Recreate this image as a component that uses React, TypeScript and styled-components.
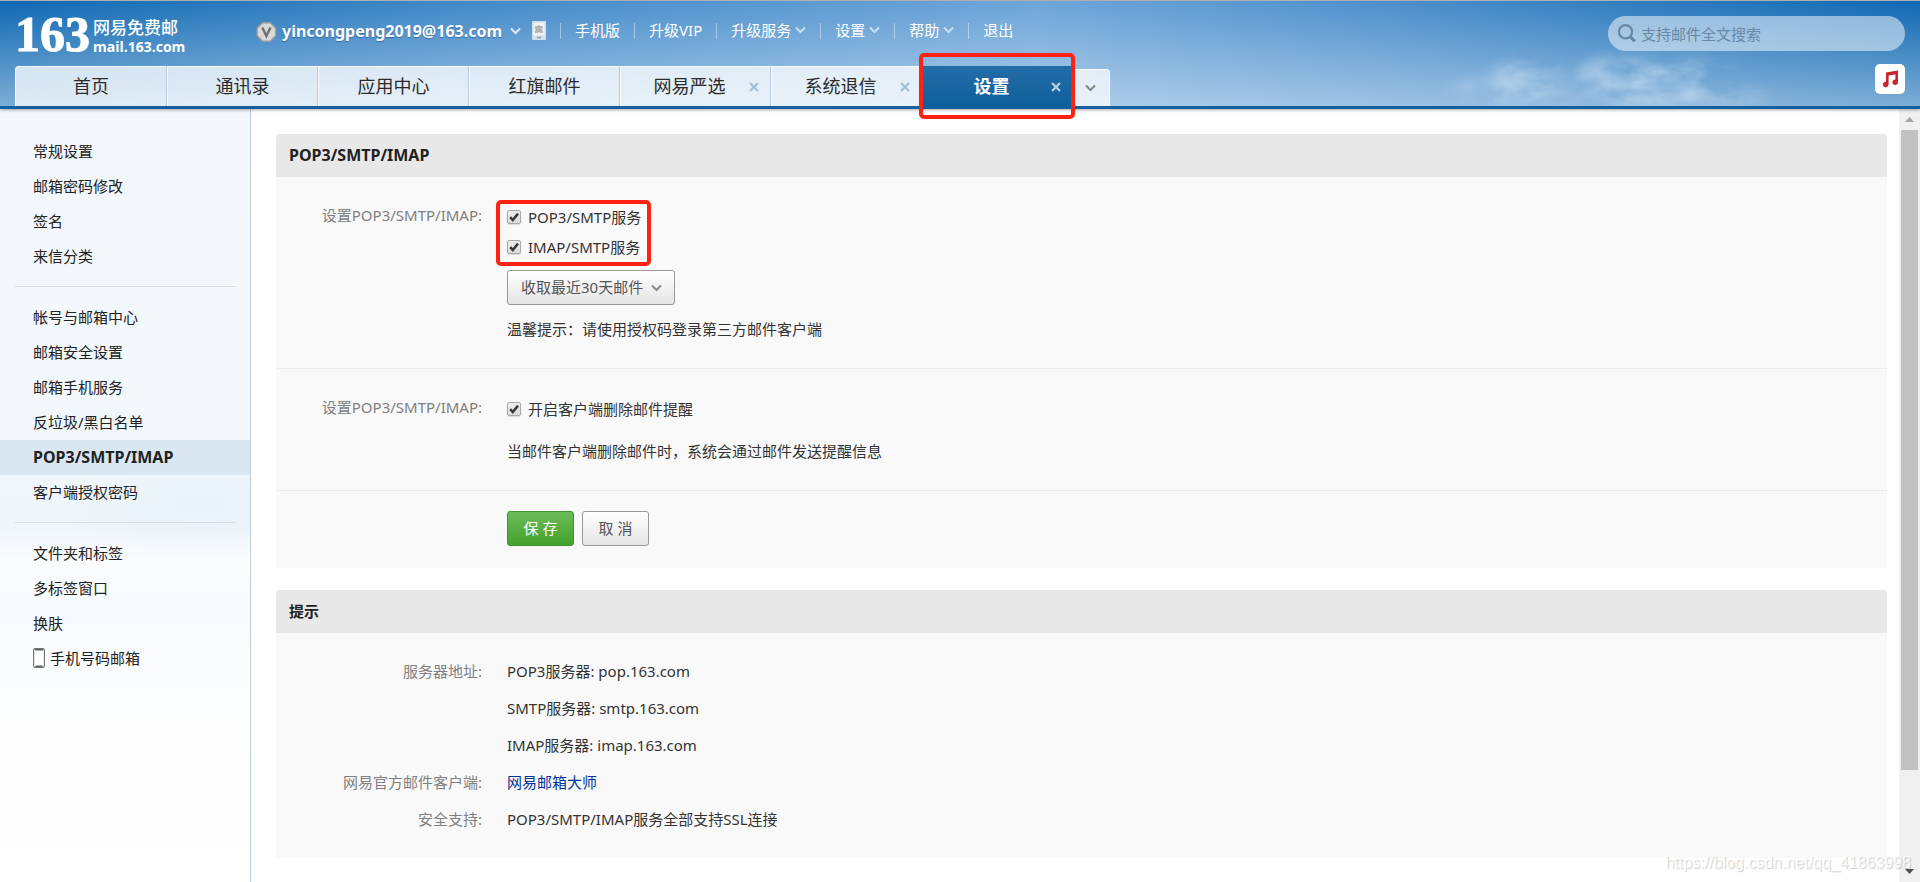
import React from "react";
import styled, { createGlobalStyle, css } from "styled-components";

const GlobalStyle = createGlobalStyle`
  *, *::before, *::after { box-sizing: border-box; }
  body {
    margin: 0;
    background: #fff;
    color: #333;
    font: 15px/30px "Noto Sans", "Noto Sans CJK SC", sans-serif;
  }
  a { color: inherit; text-decoration: none; }
  button, input, select { font: inherit; color: inherit; margin: 0; }
  button { padding: 0; border: 0; background: none; cursor: pointer; }
  h2, p, ul, dl, dd { margin: 0; padding: 0; }
  ul { list-style: none; }
`;

const Page = styled.div`
  position: relative;
  display: flex;
  flex-direction: column;
  min-height: 100vh;
`;

/* ---------- header ---------- */

const Header = styled.header`
  position: relative;
  z-index: 1;
  display: flex;
  justify-content: space-between;
  padding: 0 15px;
  border-top: 1px solid #b0b0b0;
  border-bottom: 3px solid #12609f;
  background:
    linear-gradient(rgba(255, 255, 255, 0), rgba(255, 255, 255, 0.46)),
    linear-gradient(90deg, #0f68b2, #4189c8 24%, #6da5d8 54%, #4d8fcb 72%, #0f68b2);
  box-shadow: 0 1px 3px rgba(0, 0, 0, 0.35);
`;

const Clouds = styled.svg`
  position: absolute;
  right: 90px;
  bottom: 0;
  width: 400px;
  height: 66px;
  pointer-events: none;
`;

const HeaderMain = styled.div`
  display: flex;
  flex-direction: column;
`;

const TopBar = styled.div`
  display: flex;
  align-items: flex-start;
  height: 65px;
`;

const Logo = styled.a`
  display: flex;
  align-items: flex-start;
  gap: 6px;
  width: 241px;
  padding-top: 10px;
  color: #fff;
`;

const LogoMark = styled.span`
  width: 72px;
  font: bold 50px/47px "Liberation Serif", serif;
  -webkit-text-stroke: 1px #fff;
`;

const LogoText = styled.span`
  display: flex;
  flex-direction: column;
  padding-top: 5px;
`;

const LogoName = styled.span`
  font: 500 17px/22px "Noto Sans CJK SC", sans-serif;
`;

const LogoDomain = styled.span`
  font: 700 14px/18px "Open Sans", sans-serif;
`;

const Account = styled.div`
  display: flex;
  align-items: center;
  height: 62px;
  color: #fff;
`;

const AccountName = styled.button`
  display: flex;
  align-items: center;
  gap: 8px;
  margin: 0 11px 0 5px;
  padding-bottom: 2px;
  font-size: 16px;
  font-weight: 700;
  text-shadow: 0 1px 1px rgba(0, 40, 90, 0.4);
`;

const TopLinks = styled.ul`
  display: flex;
  align-items: center;
  height: 60px;
  margin-left: 14px;
  color: #fff;
`;

const TopLinkItem = styled.li`
  display: flex;
  align-items: center;
  height: 16px;
  padding: 0 14px;
  border-left: 1px solid rgba(255, 255, 255, 0.4);
`;

const TopLink = styled.a`
  display: flex;
  align-items: center;
  gap: 4px;
  padding-bottom: 2px;
`;

const Tabs = styled.nav`
  display: flex;
  align-items: flex-end;
  height: 40px;
`;

const Tab = styled.div<{ $active?: boolean; $first?: boolean }>`
  position: relative;
  display: flex;
  align-items: center;
  width: 151px;
  height: 40px;
  font-size: 18px;
  color: #2b2b2b;
  border-top: 1px solid #f6fafd;
  border-right: 1px solid #b9cbda;
  background: rgba(255, 255, 255, 0.75);
  box-shadow: inset 1px 0 rgba(255, 255, 255, 0.8);
  ${(p) => p.$first && css`
    width: 152px;
    border-top-left-radius: 4px;
  `}
  ${(p) => p.$active && css`
    color: #fff;
    font-weight: 700;
    border-color: #1f6ba6;
    background: linear-gradient(#236da7, #0f5f9b);
    box-shadow: none;
  `}
`;

const TabSpacer = styled.span`
  width: 12px;
`;

const TabLabel = styled.button`
  flex: 1;
  height: 100%;
  padding: 0 0 1px 1px;
`;

const TabClose = styled.button`
  display: grid;
  place-items: center;
  width: 16px;
  height: 16px;
  margin-right: 8px;
`;

const TabMore = styled.button`
  display: grid;
  place-items: center;
  width: 37px;
  height: 37px;
  padding-right: 2px;
  border: 1px solid #f6fafd;
  border-width: 1px 1px 0 0;
  border-top-right-radius: 4px;
  background: rgba(255, 255, 255, 0.72);
`;

const Mark = styled.span<{ $inset: string }>`
  position: absolute;
  inset: ${(p) => p.$inset};
  border: 4px solid #ff2213;
  border-radius: 5px;
  pointer-events: none;
`;

const HeaderSide = styled.div`
  position: relative;
  display: flex;
  flex-direction: column;
  align-items: flex-end;
  gap: 13px;
  padding-top: 15px;
`;

const Search = styled.label`
  display: flex;
  align-items: center;
  gap: 4px;
  width: 297px;
  height: 35px;
  padding: 0 16px 0 9px;
  border-radius: 18px;
  background: rgba(255, 255, 255, 0.5);
`;

const SearchInput = styled.input`
  flex: 1;
  min-width: 0;
  border: 0;
  padding: 0;
  outline: 0;
  background: none;
  &::placeholder { color: #6788a6; opacity: 1; }
`;

const MusicButton = styled.button`
  display: grid;
  place-items: center;
  width: 30px;
  height: 30px;
  border-radius: 5px;
  background: #fff;
`;

/* ---------- sidebar ---------- */

const Body = styled.div`
  flex: 1;
  display: flex;
`;

const Sidebar = styled.nav`
  flex: none;
  width: 251px;
  padding-top: 25px;
  border-right: 1px solid #c0cdd7;
  background:
    radial-gradient(140px 50px at 80% 396px, rgba(226, 237, 251, 0.5), rgba(226, 237, 251, 0)),
    linear-gradient(#f1f7fc, #f3f8fc 250px, #eff6fa 420px, #fafcfe 450px, #f7fafd 500px, #fefefe 640px, #fff);
`;

const SideGroup = styled.ul`
  & + &::before {
    content: "";
    display: block;
    height: 1px;
    margin: 12px 14px 13px 15px;
    background: #dcdcdf;
  }
`;

const SideLink = styled.a<{ $active?: boolean }>`
  display: flex;
  align-items: center;
  gap: 5px;
  height: 35px;
  padding: 0 0 2px 33px;
  color: #222;
  ${(p) => p.$active && css`
    font-size: 16px;
    font-weight: 700;
    background: #d9e7f3;
  `}
`;

/* ---------- content ---------- */

const Content = styled.main`
  flex: 1;
  min-width: 0;
  display: flex;
  flex-direction: column;
  gap: 22px;
  padding: 25px 12px 24px 25px;
`;

const Card = styled.section`
  overflow: hidden;
  border-radius: 4px;
  background: #f9f9f9;
`;

const CardTitle = styled.h2<{ $latin?: boolean }>`
  padding: 0 13px;
  font-size: ${(p) => (p.$latin ? 16 : 15)}px;
  line-height: 43px;
  color: #222;
  background: #e8e8e8;
`;

const Row = styled.div`
  display: grid;
  grid-template-columns: 206px 1fr;
  column-gap: 25px;
  padding: 25px 0 24px;
  & + & { border-top: 1px solid #ebebeb; }
`;

const ActionRow = styled.div`
  display: flex;
  gap: 8px;
  padding: 20px 0 22px 231px;
  border-top: 1px solid #ebebeb;
`;

const RowLabel = styled.div`
  line-height: 26px;
  text-align: right;
  color: #808080;
`;

const RowValue = styled.div`
  display: flex;
  flex-direction: column;
  align-items: flex-start;
`;

const CheckGroup = styled.div`
  position: relative;
`;

const CheckLabel = styled.label`
  display: flex;
  align-items: center;
  gap: 7px;
`;

const CheckBoxWrap = styled.span`
  display: grid;
  width: 14px;
  height: 14px;
  & > * { grid-area: 1 / 1; }
  svg { pointer-events: none; }
`;

const CheckInput = styled.input`
  appearance: none;
  width: 14px;
  height: 14px;
  border: 1px solid #a9a9a9;
  border-radius: 2px;
  background: linear-gradient(#eee, #dcdcdc);
  box-shadow: 0 1px 1px rgba(0, 0, 0, 0.12);
  & + svg { visibility: hidden; }
  &:checked + svg { visibility: visible; }
`;

const SelectWrap = styled.div`
  display: grid;
  align-items: center;
  margin-top: 8px;
  & > * { grid-area: 1 / 1; }
  svg { justify-self: end; margin-right: 13px; pointer-events: none; }
`;

const Select = styled.select`
  appearance: none;
  width: 168px;
  height: 35px;
  padding: 0 0 1px 13px;
  border: 1px solid #999;
  border-radius: 3px;
  color: #555;
  background: linear-gradient(#fff, #e5e5e5);
`;

const Hint = styled.p<{ $gap: number }>`
  margin-top: ${(p) => p.$gap}px;
`;

const Button = styled.button<{ $primary?: boolean }>`
  width: 67px;
  height: 35px;
  padding-bottom: 2px;
  border: 1px solid #999;
  border-radius: 3px;
  color: #555;
  background: linear-gradient(#fff, #e5e5e5);
  ${(p) => p.$primary && css`
    color: #fff;
    border-color: #3d9430;
    background: linear-gradient(#6cbb5a, #43a22b);
  `}
`;

const Tips = styled.dl`
  display: grid;
  grid-template-columns: 206px 1fr;
  column-gap: 25px;
  padding: 20px 0;
  line-height: 37px;
  dt { text-align: right; color: #808080; }
  dd { grid-column: 2; }
`;

const ClientLink = styled.a`
  color: #003399;
`;

/* ---------- scroll bar and watermark ---------- */

const ScrollBar = styled.div`
  flex: none;
  display: flex;
  flex-direction: column;
  width: 21px;
  padding: 0 2px;
  background: #f0f0f0;
`;

const ScrollArrow = styled.span`
  display: grid;
  place-items: center;
  height: 21px;
`;

const ScrollThumb = styled.span`
  flex: 7;
  background: #c1c1c1;
`;

const ScrollRest = styled.span`
  flex: 1;
`;

const Watermark = styled.span`
  position: absolute;
  right: 9px;
  bottom: 8px;
  z-index: 2;
  font: 16px/22px "Liberation Sans", sans-serif;
  color: rgba(255, 255, 255, 0.8);
  text-shadow: 1px 1px 1px rgba(0, 0, 0, 0.2);
`;

/* ---------- icons ---------- */

const Chevron = ({ color }: { color: string }) => (
  <svg width="11" height="8" viewBox="0 0 11 8" fill="none" aria-hidden="true">
    <path d="M1 1.5 5.5 6 10 1.5" stroke={color} strokeWidth="2" />
  </svg>
);

const Cross = ({ color }: { color: string }) => (
  <svg width="10" height="10" viewBox="0 0 10 10" fill="none" aria-hidden="true">
    <path d="M1 1 9 9M9 1 1 9" stroke={color} strokeWidth="2.2" />
  </svg>
);

const Badge = () => (
  <svg width="21" height="20" viewBox="0 0 21 20" aria-hidden="true">
    <path d="M6.6 .8h7.6l5.5 5.4v7.6l-5.5 5.4H6.6L1.1 13.8V6.2z" fill="#d9d9d9" stroke="#9b9b9b" strokeWidth="1.4" strokeLinejoin="round" />
    <path d="M6.3 5.5 10.4 14 14.5 5.5" fill="none" stroke="#6f6f6f" strokeWidth="2.4" />
  </svg>
);

const PhoneApp = () => (
  <svg width="14" height="23" viewBox="0 0 14 23" aria-hidden="true">
    <rect width="14" height="19" rx="1" fill="#d5dfe8" />
    <rect x="1.5" y="2" width="11" height="12.5" fill="#f0f2f4" />
    <path d="M3 5h2.2a1.6 1.6 0 0 1 3 0h2.6v2.4a1.2 1.2 0 0 0 0 2.3V12H8.4a1.6 1.6 0 0 0-2.8 0H3V9.6a1.2 1.2 0 0 0 0-2.2z" fill="#b5b5b5" />
    <rect x="5" y="15.6" width="4" height="1.8" fill="#86abcb" />
  </svg>
);

const SearchIcon = () => (
  <svg width="20" height="21" viewBox="0 0 20 21" fill="none" aria-hidden="true">
    <path d="m13 15 5.5 5" stroke="#c9dcec" strokeWidth="2.4" />
    <circle cx="8.5" cy="8.8" r="6.6" stroke="#6788a6" strokeWidth="2.2" />
    <path d="m13 13.6 5 5" stroke="#6788a6" strokeWidth="3" />
  </svg>
);

const MusicIcon = () => (
  <svg width="17" height="18" viewBox="0 0 17 18" aria-hidden="true">
    <path d="M4 2.6 16 .6V4L6.6 5.6v8.6H4z" fill="#c9242b" />
    <path d="M13.4 2H16v10.4h-2.6z" fill="#c9242b" />
    <circle cx="3.7" cy="14.5" r="2.7" fill="#c9242b" />
    <circle cx="13.2" cy="12.3" r="2.7" fill="#c9242b" />
  </svg>
);

const CheckIcon = () => (
  <svg width="14" height="14" viewBox="0 0 14 14" fill="none" aria-hidden="true">
    <path d="M3.2 7.2 5.8 10 11 3.6" stroke="#3a3a3a" strokeWidth="2.5" />
  </svg>
);

const MobileIcon = () => (
  <svg width="12" height="20" viewBox="0 0 12 20" aria-hidden="true">
    <rect x=".6" y=".6" width="10.8" height="18.8" rx="1.6" fill="#fff" stroke="#77797c" strokeWidth="1.2" />
    <path d="M2 1.6h8M2.5 18.4h7" stroke="#5f6164" strokeWidth="1.8" />
  </svg>
);

const CloudArt = () => (
  <Clouds viewBox="0 0 400 66" aria-hidden="true">
    <defs>
      <filter id="cloud" filterUnits="userSpaceOnUse" x="0" y="0" width="400" height="66">
        <feTurbulence type="fractalNoise" baseFrequency="0.022 0.04" numOctaves="5" seed="11" result="noise" />
        <feColorMatrix
          in="noise"
          values="0 0 0 0 0.78  0 0 0 0 0.88  0 0 0 0 0.96  2.4 0 0 0 -0.7"
          result="wisps"
        />
        <feGaussianBlur in="SourceGraphic" stdDeviation="7" result="soft" />
        <feComposite in="wisps" in2="soft" operator="in" />
        <feGaussianBlur stdDeviation="0.6" />
      </filter>
    </defs>
    <g filter="url(#cloud)">
      <ellipse cx="98" cy="34" rx="34" ry="14" opacity=".42" />
      <ellipse cx="70" cy="50" rx="50" ry="12" opacity=".25" />
      <ellipse cx="195" cy="32" rx="50" ry="14" opacity=".42" />
      <ellipse cx="265" cy="36" rx="42" ry="16" opacity=".4" />
      <ellipse cx="160" cy="54" rx="100" ry="12" opacity=".2" />
      <ellipse cx="250" cy="58" rx="90" ry="14" opacity=".32" />
    </g>
  </Clouds>
);

/* ---------- data ---------- */

const topLinks = [
  { text: "手机版" },
  { text: "升级VIP" },
  { text: "升级服务", menu: true },
  { text: "设置", menu: true },
  { text: "帮助", menu: true },
  { text: "退出" },
];

const tabs = [
  { text: "首页" },
  { text: "通讯录" },
  { text: "应用中心" },
  { text: "红旗邮件" },
  { text: "网易严选", closable: true },
  { text: "系统退信", closable: true },
  { text: "设置", closable: true, active: true },
];

const sideGroups = [
  ["常规设置", "邮箱密码修改", "签名", "来信分类"],
  ["帐号与邮箱中心", "邮箱安全设置", "邮箱手机服务", "反垃圾/黑白名单", "POP3/SMTP/IMAP", "客户端授权密码"],
  ["文件夹和标签", "多标签窗口", "换肤", "手机号码邮箱"],
];

const Check = ({ text }: { text: string }) => (
  <CheckLabel>
    <CheckBoxWrap>
      <CheckInput type="checkbox" defaultChecked />
      <CheckIcon />
    </CheckBoxWrap>
    {text}
  </CheckLabel>
);

export default function App() {
  return (
    <Page>
      <GlobalStyle />
      <Header>
        <CloudArt />
        <HeaderMain>
          <TopBar>
            <Logo href="#home">
              <LogoMark>163</LogoMark>
              <LogoText>
                <LogoName>网易免费邮</LogoName>
                <LogoDomain>mail.163.com</LogoDomain>
              </LogoText>
            </Logo>
            <Account>
              <Badge />
              <AccountName>
                yincongpeng2019@163.com
                <Chevron color="#dcebf7" />
              </AccountName>
              <PhoneApp />
            </Account>
            <TopLinks>
              {topLinks.map((l) => (
                <TopLinkItem key={l.text}>
                  <TopLink href="#top">
                    {l.text}
                    {l.menu && <Chevron color="#c9dff2" />}
                  </TopLink>
                </TopLinkItem>
              ))}
            </TopLinks>
          </TopBar>
          <Tabs>
            {tabs.map((t, i) => (
              <Tab key={t.text} $first={i === 0} $active={t.active}>
                {t.closable && <TabSpacer />}
                <TabLabel>{t.text}</TabLabel>
                {t.closable && (
                  <TabClose aria-label="关闭">
                    <Cross color={t.active ? "#b9d0e3" : "#a3bdd3"} />
                  </TabClose>
                )}
                {t.active && <Mark $inset="-14px -3px -13px -3px" />}
              </Tab>
            ))}
            <TabMore aria-label="更多标签">
              <Chevron color="#858585" />
            </TabMore>
          </Tabs>
        </HeaderMain>
        <HeaderSide>
          <Search>
            <SearchIcon />
            <SearchInput type="text" placeholder="支持邮件全文搜索" aria-label="搜索" />
          </Search>
          <MusicButton aria-label="音乐">
            <MusicIcon />
          </MusicButton>
        </HeaderSide>
      </Header>

      <Body>
        <Sidebar>
          {sideGroups.map((group) => (
            <SideGroup key={group[0]}>
              {group.map((text) => (
                <li key={text}>
                  <SideLink href="#settings" $active={text === "POP3/SMTP/IMAP"}>
                    {text === "手机号码邮箱" && <MobileIcon />}
                    {text}
                  </SideLink>
                </li>
              ))}
            </SideGroup>
          ))}
        </Sidebar>

        <Content>
          <Card>
            <CardTitle $latin>POP3/SMTP/IMAP</CardTitle>
            <Row>
              <RowLabel>设置POP3/SMTP/IMAP:</RowLabel>
              <RowValue>
                <CheckGroup>
                  <Check text="POP3/SMTP服务" />
                  <Check text="IMAP/SMTP服务" />
                  <Mark $inset="-2px -10px -4px -11px" />
                </CheckGroup>
                <SelectWrap>
                  <Select aria-label="收取范围" defaultValue="30">
                    <option value="30">收取最近30天邮件</option>
                    <option value="all">收取全部邮件</option>
                  </Select>
                  <Chevron color="#8a8a8a" />
                </SelectWrap>
                <Hint $gap={9}>温馨提示：请使用授权码登录第三方邮件客户端</Hint>
              </RowValue>
            </Row>
            <Row>
              <RowLabel>设置POP3/SMTP/IMAP:</RowLabel>
              <RowValue>
                <Check text="开启客户端删除邮件提醒" />
                <Hint $gap={12}>当邮件客户端删除邮件时，系统会通过邮件发送提醒信息</Hint>
              </RowValue>
            </Row>
            <ActionRow>
              <Button $primary>保 存</Button>
              <Button>取 消</Button>
            </ActionRow>
          </Card>

          <Card>
            <CardTitle>提示</CardTitle>
            <Tips>
              <dt>服务器地址:</dt>
              <dd>POP3服务器: pop.163.com</dd>
              <dd>SMTP服务器: smtp.163.com</dd>
              <dd>IMAP服务器: imap.163.com</dd>
              <dt>网易官方邮件客户端:</dt>
              <dd><ClientLink href="#master">网易邮箱大师</ClientLink></dd>
              <dt>安全支持:</dt>
              <dd>POP3/SMTP/IMAP服务全部支持SSL连接</dd>
            </Tips>
          </Card>
        </Content>

        <ScrollBar aria-hidden="true">
          <ScrollArrow>
            <svg width="9" height="5" viewBox="0 0 9 5"><path d="M0 5 4.5 0 9 5z" fill="#a3a3a3" /></svg>
          </ScrollArrow>
          <ScrollThumb />
          <ScrollRest />
          <ScrollArrow>
            <svg width="9" height="5" viewBox="0 0 9 5"><path d="M0 0 4.5 5 9 0z" fill="#505050" /></svg>
          </ScrollArrow>
        </ScrollBar>
      </Body>
      <Watermark>https://blog.csdn.net/qq_41863998</Watermark>
    </Page>
  );
}
